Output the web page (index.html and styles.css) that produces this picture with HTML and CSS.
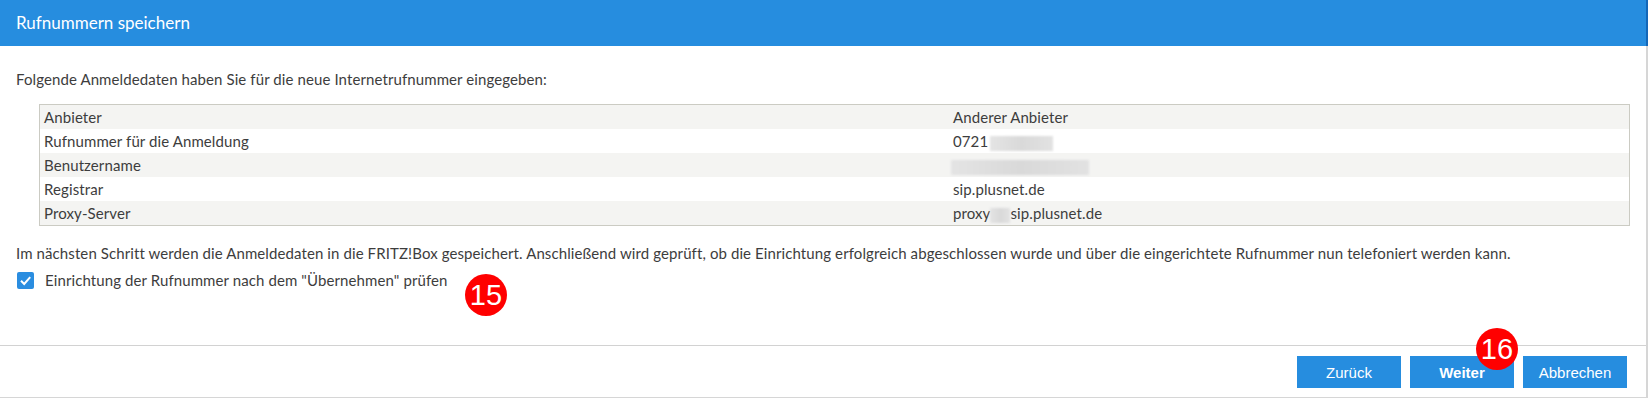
FILE: index.html
```html
<!DOCTYPE html>
<html lang="de">
   <head>
      <meta charset="utf-8">
      <title>Rufnummern speichern</title>
      <link rel="stylesheet" href="styles.css">
   </head>
   <body>
      <div class="dialog">
         <div class="dialog-head">Rufnummern speichern</div>
         <div class="dialog-body">
            <p class="intro">Folgende Anmeldedaten haben Sie für die neue Internetrufnummer eingegeben:</p>
            <table class="data">
               <tr><td class="key">Anbieter</td><td>Anderer Anbieter</td></tr>
               <tr><td class="key">Rufnummer für die Anmeldung</td><td>0721<span class="blur blur-num"></span></td></tr>
               <tr><td class="key">Benutzername</td><td><span class="blur blur-user"></span></td></tr>
               <tr><td class="key">Registrar</td><td>sip.plusnet.de</td></tr>
               <tr><td class="key">Proxy-Server</td><td>proxy<span class="blur blur-proxy"></span>sip.plusnet.de</td></tr>
            </table>
            <p class="note">Im nächsten Schritt werden die Anmeldedaten in die FRITZ!Box gespeichert. Anschließend wird geprüft, ob die Einrichtung erfolgreich abgeschlossen wurde und über die eingerichtete Rufnummer nun telefoniert werden kann.</p>
            <label class="check">
               <span class="box">
                  <svg width="17" height="17" viewBox="0 0 17 17"><path d="M4 8.8 L7.2 12 L13.2 5.2" fill="none" stroke="#fff" stroke-width="2"/></svg>
               </span>
               Einrichtung der Rufnummer nach dem "Übernehmen" prüfen
            </label>
         </div>
         <div class="dialog-foot">
            <button class="btn">Zurück</button>
            <button class="btn btn-main">Weiter</button>
            <button class="btn">Abbrechen</button>
         </div>
         <span class="badge badge-15">15</span>
         <span class="badge badge-16">16</span>
      </div>
   </body>
</html>
```

FILE: styles.css
```css
body {
   margin: 0;
   background-color: white;
   color: #3d3d3d;
   font-family: Lato, "Liberation Sans", sans-serif;
   font-size: 15px;
   letter-spacing: 0.1px;
}
.dialog {
   position: relative;
   width: 1646px;
   height: 397px;
   display: flex;
   flex-direction: column;
   border-right: 2px solid #d6d6d6;
   border-bottom: 1px solid #d6d6d6;
}
.dialog-head {
   height: 46px;
   margin-right: -2px;
   padding: 0 16px;
   line-height: 46px;
   font-size: 17px;
   letter-spacing: 0;
   color: white;
   background-color: #268ddf;
   border-right: 2px solid #1467b8;
}
.dialog-body {
   flex: 1;
   padding: 0 16px;
}
.intro {
   margin: 21px 0 0;
   line-height: 24px;
}
.data {
   margin: 13px 0 0 23px;
   width: calc(100% - 23px);
   border: 1px solid #cbcbc3;
   border-collapse: collapse;
}
.data td {
   height: 24px;
   padding: 0 4px;
   line-height: 24px;
   white-space: nowrap;
}
.data td.key {
   width: 901px;
}
.data tr:nth-child(odd) {
   background-color: #f4f4f2;
}
.blur {
   display: inline-block;
   vertical-align: middle;
   height: 15px;
   background: linear-gradient(90deg, #e4e4e4, #d9d9d9 50%, #e2e2e2);
   filter: blur(1px);
}
.blur-num {
   width: 63px;
   margin-left: 2px;
}
.blur-user {
   width: 138px;
   margin-left: -2px;
}
.blur-proxy {
   width: 20px;
}
.note {
   margin: 15px 0 0;
   line-height: 24px;
}
.check {
   display: flex;
   align-items: center;
   gap: 11px;
   margin-top: 3px;
   line-height: 24px;
}
.box {
   width: 17px;
   height: 17px;
   margin-left: 1px;
   border-radius: 2px;
   background-color: #2a8de0;
}
.box svg {
   display: block;
}
.dialog-foot {
   display: flex;
   justify-content: flex-end;
   gap: 9px;
   padding: 10px 19px 9px;
   border-top: 1px solid #d2d2d2;
}
.btn {
   width: 104px;
   height: 32px;
   border: none;
   font-family: "Liberation Sans", Arial, sans-serif;
   font-size: 15px;
   color: white;
   background-color: #268ddf;
}
.btn-main {
   font-weight: bold;
}
.badge {
   position: absolute;
   width: 42px;
   height: 42px;
   border-radius: 50%;
   background-color: #f00;
   color: white;
   font-family: "Liberation Sans", Arial, sans-serif;
   font-size: 29px;
   letter-spacing: 0;
   line-height: 42px;
   text-align: center;
}
.badge-15 {
   left: 465px;
   top: 274px;
}
.badge-16 {
   left: 1476px;
   top: 328px;
}
```
